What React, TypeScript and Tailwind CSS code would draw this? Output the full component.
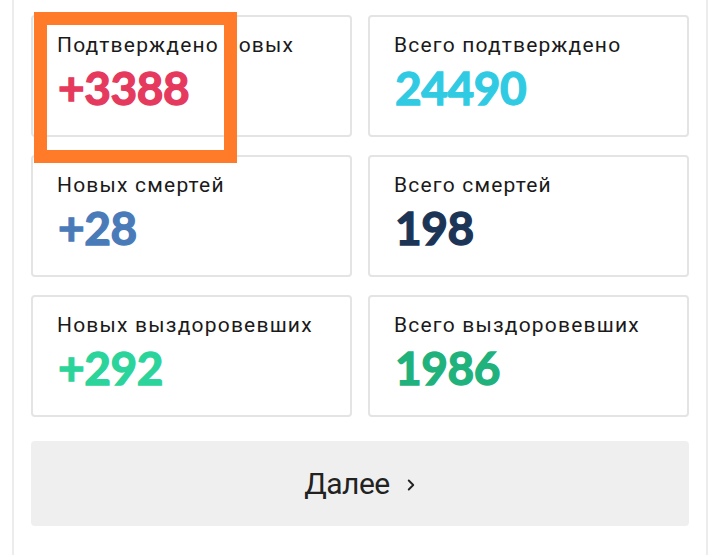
import { ChevronRight } from "lucide-react";

type Stat = {
  label: string;
  value: string;
  color: string;
};

const stats: Stat[] = [
  { label: "Подтверждено новых", value: "+3388", color: "text-[#e5395e]" },
  { label: "Всего подтверждено", value: "24490", color: "text-[#30cbe3]" },
  { label: "Новых смертей", value: "+28", color: "text-[#4a7bb9]" },
  { label: "Всего смертей", value: "198", color: "text-[#1c3557]" },
  { label: "Новых выздоровевших", value: "+292", color: "text-[#2bd49a]" },
  { label: "Всего выздоровевших", value: "1986", color: "text-[#1fb27c]" },
];

function StatCard({ stat }: { stat: Stat }) {
  return (
    <div className="h-[122px] rounded-[4px] border-2 border-[#e4e4e4] bg-white pl-[24px] pt-[16px]">
      <div className="font-['Roboto',sans-serif] text-[21px] leading-[25px] tracking-[1.2px] text-[#1a1a1a]">
        {stat.label}
      </div>
      <div
        className={`mt-[7px] pl-[1px] font-['Lato',sans-serif] text-[46px] font-bold leading-[46px] tracking-[-0.4px] [-webkit-text-stroke:1.3px_currentColor] ${stat.color}`}
      >
        {stat.value}
      </div>
    </div>
  );
}

export default function App() {
  return (
    <div className="relative h-[555px] w-[720px] overflow-hidden bg-white">
      <div className="mx-[12px] h-full border-x-2 border-[#ececec] px-[17px] pt-[15px]">
        {/* Stats grid */}
        <div className="grid grid-cols-2 gap-x-[16px] gap-y-[18px]">
          {stats.map((s) => (
            <StatCard key={s.label} stat={s} />
          ))}
        </div>

        {/* Next button */}
        <button className="mt-[24px] flex h-[85px] w-full items-center justify-center gap-[12px] rounded-[4px] bg-[#efefef] pl-[4px] font-['Roboto',sans-serif] text-[30px] tracking-[-0.5px] text-[#222]">
          <span>Далее</span>
          <ChevronRight className="mt-[3px] h-[18px] w-[18px]" strokeWidth={2.5} />
        </button>
      </div>

      {/* Orange highlight annotation */}
      <div className="absolute left-[34px] top-[12px] h-[151px] w-[203px] border-[13px] border-[#ff7a29]" />
    </div>
  );
}
